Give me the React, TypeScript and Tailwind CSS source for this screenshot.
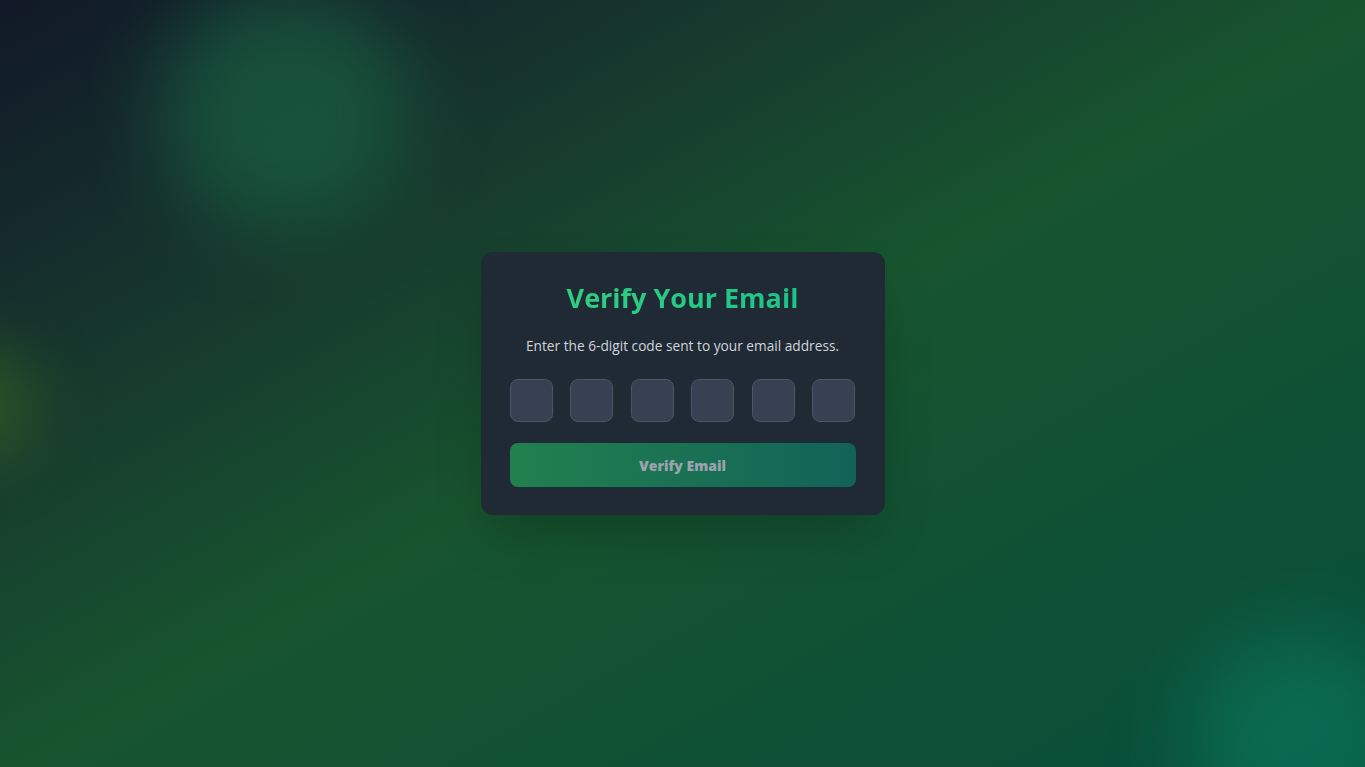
import React from "react";

const App: React.FC = () => {
  const digits = [0, 1, 2, 3, 4, 5];

  return (
    <div
      className="relative w-full h-[767px] overflow-hidden bg-gradient-to-br from-[#111827] via-[#17542e] to-[#064e3b] flex items-center justify-center"
      style={{ fontFamily: '"Open Sans", "Noto Sans", sans-serif' }}
    >
      {/* blurred blobs */}
      <div className="absolute left-[160px] top-[-10px] w-[250px] h-[240px] rounded-full bg-[#1a6a45] opacity-60 blur-[40px]" />
      <div className="absolute left-[-90px] top-[340px] w-[130px] h-[130px] rounded-full bg-[#3a6a22] opacity-50 blur-[30px]" />
      <div className="absolute left-[1190px] top-[630px] w-[220px] h-[220px] rounded-full bg-[#0b7558] opacity-70 blur-[40px]" />

      <div className="relative w-[404px] rounded-xl bg-[#1f2a35] px-[29px] pt-[28px] pb-[28px] shadow-2xl">
        <h1 className="text-center text-[27px] font-bold leading-[36px] bg-gradient-to-r from-[#34d17f] to-[#16c28a] bg-clip-text text-transparent">
          Verify Your Email
        </h1>
        <p className="mt-[20px] text-center text-[13.7px] leading-5 text-[#d1d5db]">
          Enter the 6-digit code sent to your email address.
        </p>
        <div className="mt-[23px] flex justify-between">
          {digits.map((d) => (
            <input
              key={d}
              type="text"
              maxLength={1}
              className="w-[43px] h-[43px] rounded-lg border border-[#4b5563] bg-[#374151] text-center text-xl font-bold text-white outline-none"
            />
          ))}
        </div>
        <button
          disabled
          className="mt-[21px] w-full h-[44px] rounded-lg bg-gradient-to-r from-[#22804e] to-[#126357] text-[14px] font-extrabold text-[#9ca3af]"
        >
          Verify Email
        </button>
      </div>
    </div>
  );
};

export default App;
